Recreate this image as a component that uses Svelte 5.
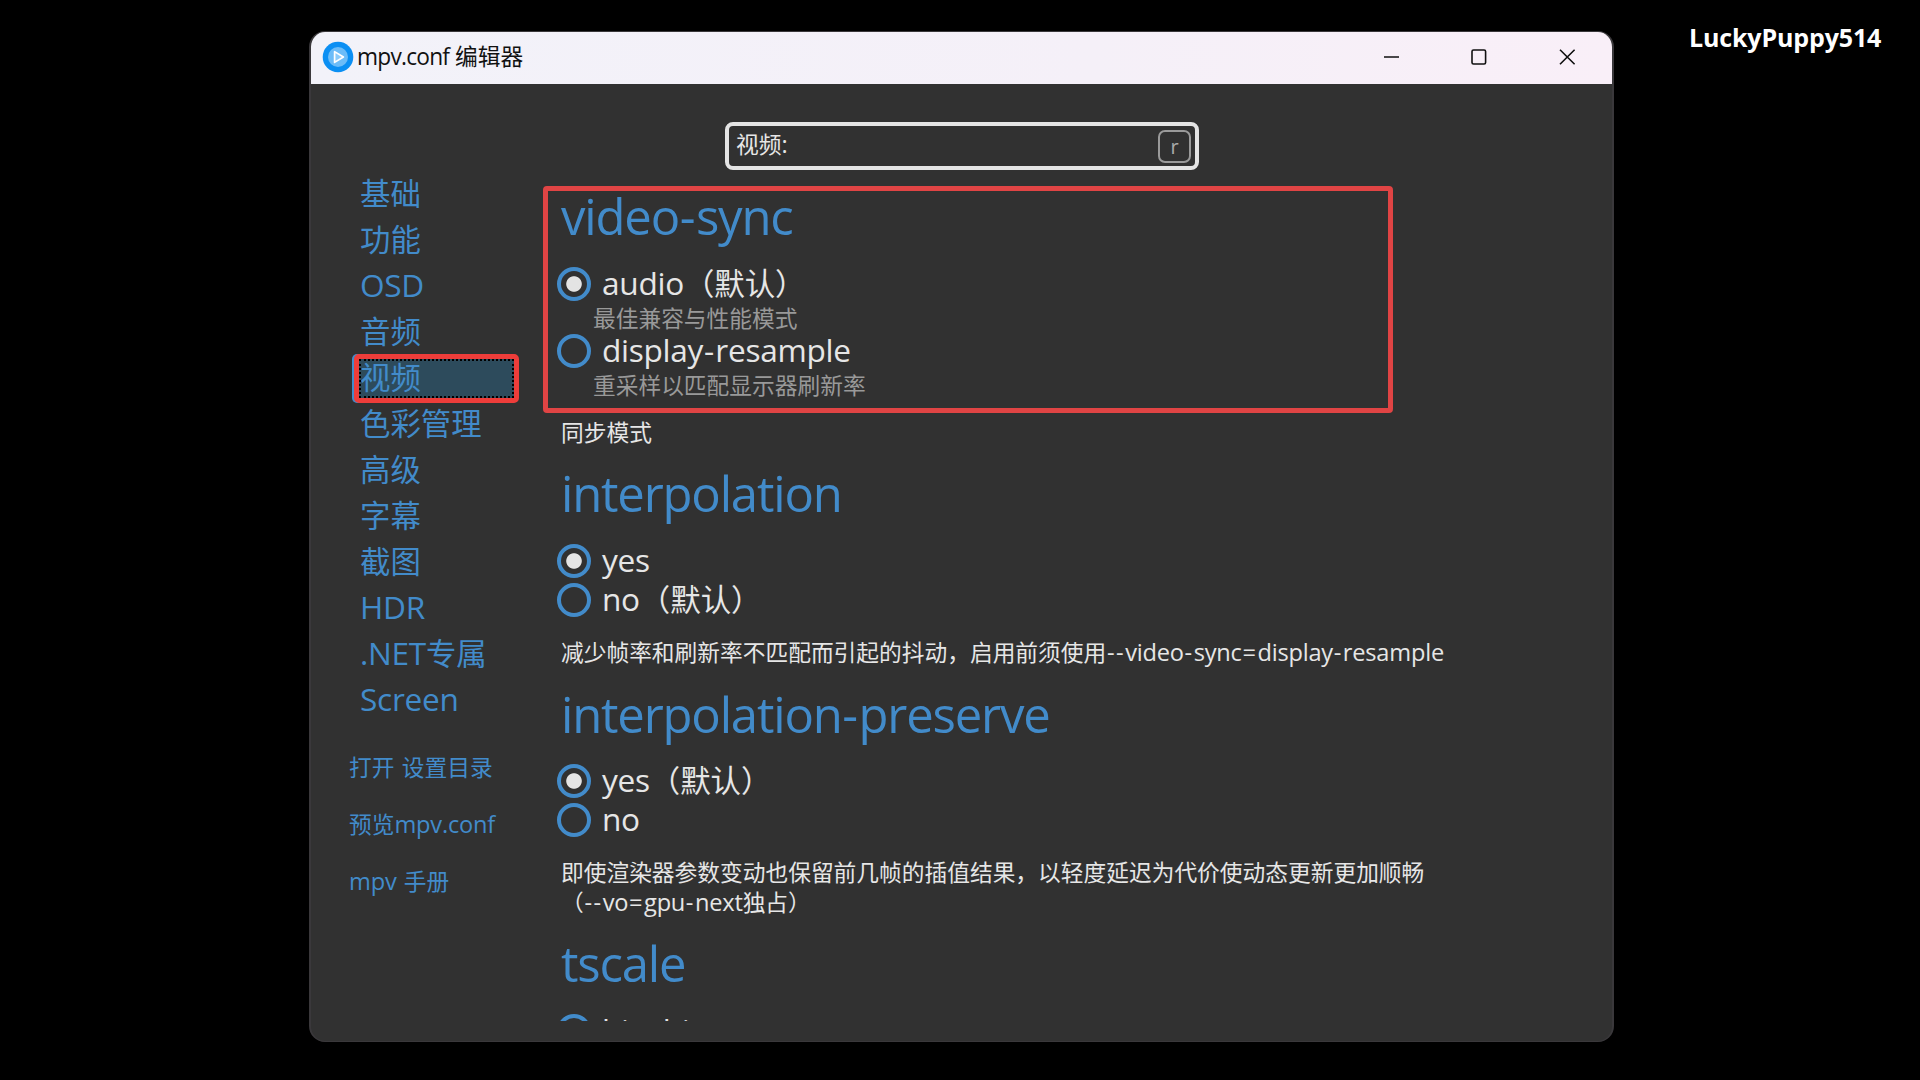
<script>
  const nav = ['基础', '功能', 'OSD', '音频', '视频', '色彩管理', '高级', '字幕', '截图', 'HDR', '.NET专属', 'Screen'];
  const links = ['打开 设置目录', '预览mpv.conf', 'mpv 手册'];
  const settings = [
    {
      name: 'video-sync',
      options: [
        { label: 'audio（默认）', on: true, help: '最佳兼容与性能模式' },
        { label: 'display-resample', help: '重采样以匹配显示器刷新率' },
      ],
      help: ['同步模式'],
      marked: true,
    },
    {
      name: 'interpolation',
      options: [{ label: 'yes', on: true }, { label: 'no（默认）' }],
      help: ['减少帧率和刷新率不匹配而引起的抖动，启用前须使用--video-sync=display-resample'],
    },
    {
      name: 'interpolation-preserve',
      options: [{ label: 'yes（默认）', on: true }, { label: 'no' }],
      help: ['即使渲染器参数变动也保留前几帧的插值结果，以轻度延迟为代价使动态更新更加顺畅', '（--vo=gpu-next独占）'],
    },
    { name: 'tscale', options: [{ label: 'bicubic' }], help: [] },
  ];
  // Latin runs and hyphens get their own tracking, so each label is split by script.
  const runs = (s) =>
    s.match(/[-=]+|[\x21-\x2c\x2e-\x3c\x3e-\x7e]+|[^\x21-\x7e]+/g).map((t) => ({
      t,
      kind: /^[-=]/.test(t) ? 'latin dash' : /[\x21-\x7e]/.test(t) ? 'latin' : 'cjk',
    }));
</script>

{#snippet mixed(text)}{#each runs(text) as r}<span class={r.kind}>{r.t}</span>{/each}{/snippet}

<div class="screen">
  <div class="watermark">LuckyPuppy514</div>
  <div class="window">
    <header>
      <svg class="logo" viewBox="0 0 32 32">
        <circle cx="16" cy="16" r="15.3" fill="#0b8ff3" />
        <circle cx="16" cy="16" r="10" fill="#6cbcf8" />
        <path d="M12.6 10.6v10.8l8.8-5.4z" fill="#8ccbfa" stroke="#fff" stroke-width="1.7" stroke-linejoin="round" />
      </svg>
      <span class="title">{@render mixed('mpv.conf 编辑器')}</span>
      <svg class="controls" viewBox="0 0 200 20">
        <path d="M4 10h15M180 2.7l14.6 14.6M194.600 2.700l-14.600 14.600" />
        <rect x="92" y="3" width="13.600" height="14" rx="1.500" />
      </svg>
    </header>
    <div class="search">
      <span class="query">{@render mixed('视频:')}</span>
      <kbd>r</kbd>
    </div>
    <div class="body">
      <aside>
        <ul>
          {#each nav as n}
            <li class:selected={n === '视频'}>{@render mixed(n)}</li>
          {/each}
        </ul>
        {#each links as l}<a>{@render mixed(l)}</a>{/each}
      </aside>
      <main>
        {#each settings as s}
          <section class:marked={s.marked}>
            <h2>{@render mixed(s.name)}</h2>
            {#each s.options as o}
              <div class="option">
                <i class="radio" class:on={o.on}></i>
                <span class="label">{@render mixed(o.label)}</span>
              </div>
              {#if o.help}<div class="hint">{@render mixed(o.help)}</div>{/if}
            {/each}
            <p>{#each s.help as line}<span class="line">{@render mixed(line)}</span>{/each}</p>
          </section>
        {/each}
      </main>
    </div>
  </div>
</div>

<style>
  :global(body) { background: #000; overflow: hidden; }
  .screen {
    position: relative; width: 1920px; height: 1080px; box-sizing: border-box; padding: 31px 0 0 309px;
    background: #000; overflow: hidden;
    font-family: 'Open Sans', 'Noto Sans CJK SC', sans-serif;
    font-size: 22.72px; color: #e6e6e6; white-space: nowrap;
  }
  .watermark { position: absolute; left: 1689px; top: 19px; color: #fff; font-weight: 700; font-size: 25px; line-height: 36px; letter-spacing: -0.14px; }
  .window {
    width: 1305px; height: 1011px; box-sizing: border-box; border: 2px solid #3a383b; border-width: 1px 2px;
    border-radius: 16px; background: #313131; overflow: hidden; display: flex; flex-direction: column;
  }
  header {
    flex: none; height: 52px; box-sizing: border-box; display: flex; align-items: center; padding: 0 0 3px 11px;
    background: linear-gradient(90deg, #f2f2f9, #f5f0f8 60%, #f9eff8); color: #111;
  }
  .logo { width: 32px; height: 32px; }
  .title { margin-left: 3px; line-height: 32px; }
  .latin { font-size: 1.04em; letter-spacing: -0.009em; line-height: 1; }
  .dash { margin-left: 0.03em; letter-spacing: 0.035em; }
  .line .dash { letter-spacing: 0.065em; }
  .title .latin { font-size: 1em; letter-spacing: -0.034em; }
  .controls { width: 200px; height: 20px; margin-left: auto; margin-right: 32px; fill: none; stroke: #111; stroke-width: 1.6; }
  .search {
    flex: none; width: 474px; height: 48px; box-sizing: border-box; margin: 38px 0 0 414px; padding: 0 4px 0 7px;
    border: 4px solid #e4e4e4; border-radius: 8px; display: flex; justify-content: space-between; align-items: center; line-height: 30px;
  }
  .query { margin-top: -3px; }
  kbd {
    width: 33px; height: 33px; box-sizing: border-box; border: 2px solid #9a9a9a; border-radius: 7px;
    font: 20px/29px 'Open Sans', sans-serif; color: #aaa; text-align: center;
  }
  .body { flex: 1; min-height: 0; display: flex; }
  aside { width: 190px; margin-left: 40px; color: #428bca; }
  ul { list-style: none; margin: 1px 0 16px; padding: 0; font-size: 30.4px; }
  li { height: 46px; line-height: 46px; padding-left: 9px; box-sizing: border-box; }
  li.selected {
    width: 165px; margin: -1px 0 -2px 3px; height: 49px; line-height: 38px; padding-left: 1px;
    border: 5px solid #ee3d3a; border-radius: 5px; background: #2d4b5c;
    outline: 2px dotted #000; outline-offset: -7px; box-shadow: -2px 0 0 #428bca;
  }
  a { display: block; height: 57.2px; line-height: 57.2px; margin-left: -2px; word-spacing: 1.5px; }
  main { flex: none; width: 940px; height: 850.5px; overflow: hidden; }
  section { position: relative; padding: 14px 0 0 20px; }
  .marked { padding-top: 14.4px; }
  .marked::after {
    content: ''; position: absolute; left: 2px; top: 16px; width: 850px; height: 227px; box-sizing: border-box;
    border: 5px solid #e04444; border-radius: 4px;
  }
  h2 { margin: 0 0 16.4px; font-weight: 400; font-size: 49px; line-height: 64px; height: 64px; color: #428bca; }
  h2 .latin { font-size: 1em; letter-spacing: -0.024em; }
  h2 .dash { margin-left: 0.015em; letter-spacing: 0.01em; }
  .option { display: flex; align-items: center; height: 38.5px; margin-left: -4px; font-size: 30.4px; }
  .radio { width: 34px; height: 34px; box-sizing: border-box; border: 4px solid #428bca; border-radius: 50%; margin-right: 11px; }
  .on { background: radial-gradient(circle, #e4e4e4 7.3px, transparent 8.2px); }
  .label { line-height: 38px; }
  .hint { margin-left: 32px; color: #999; line-height: 31px; height: 28.5px; }
  p { margin: 19.4px 0 0; }
  .line { display: block; height: 29.3px; line-height: 29.3px; }
</style>
